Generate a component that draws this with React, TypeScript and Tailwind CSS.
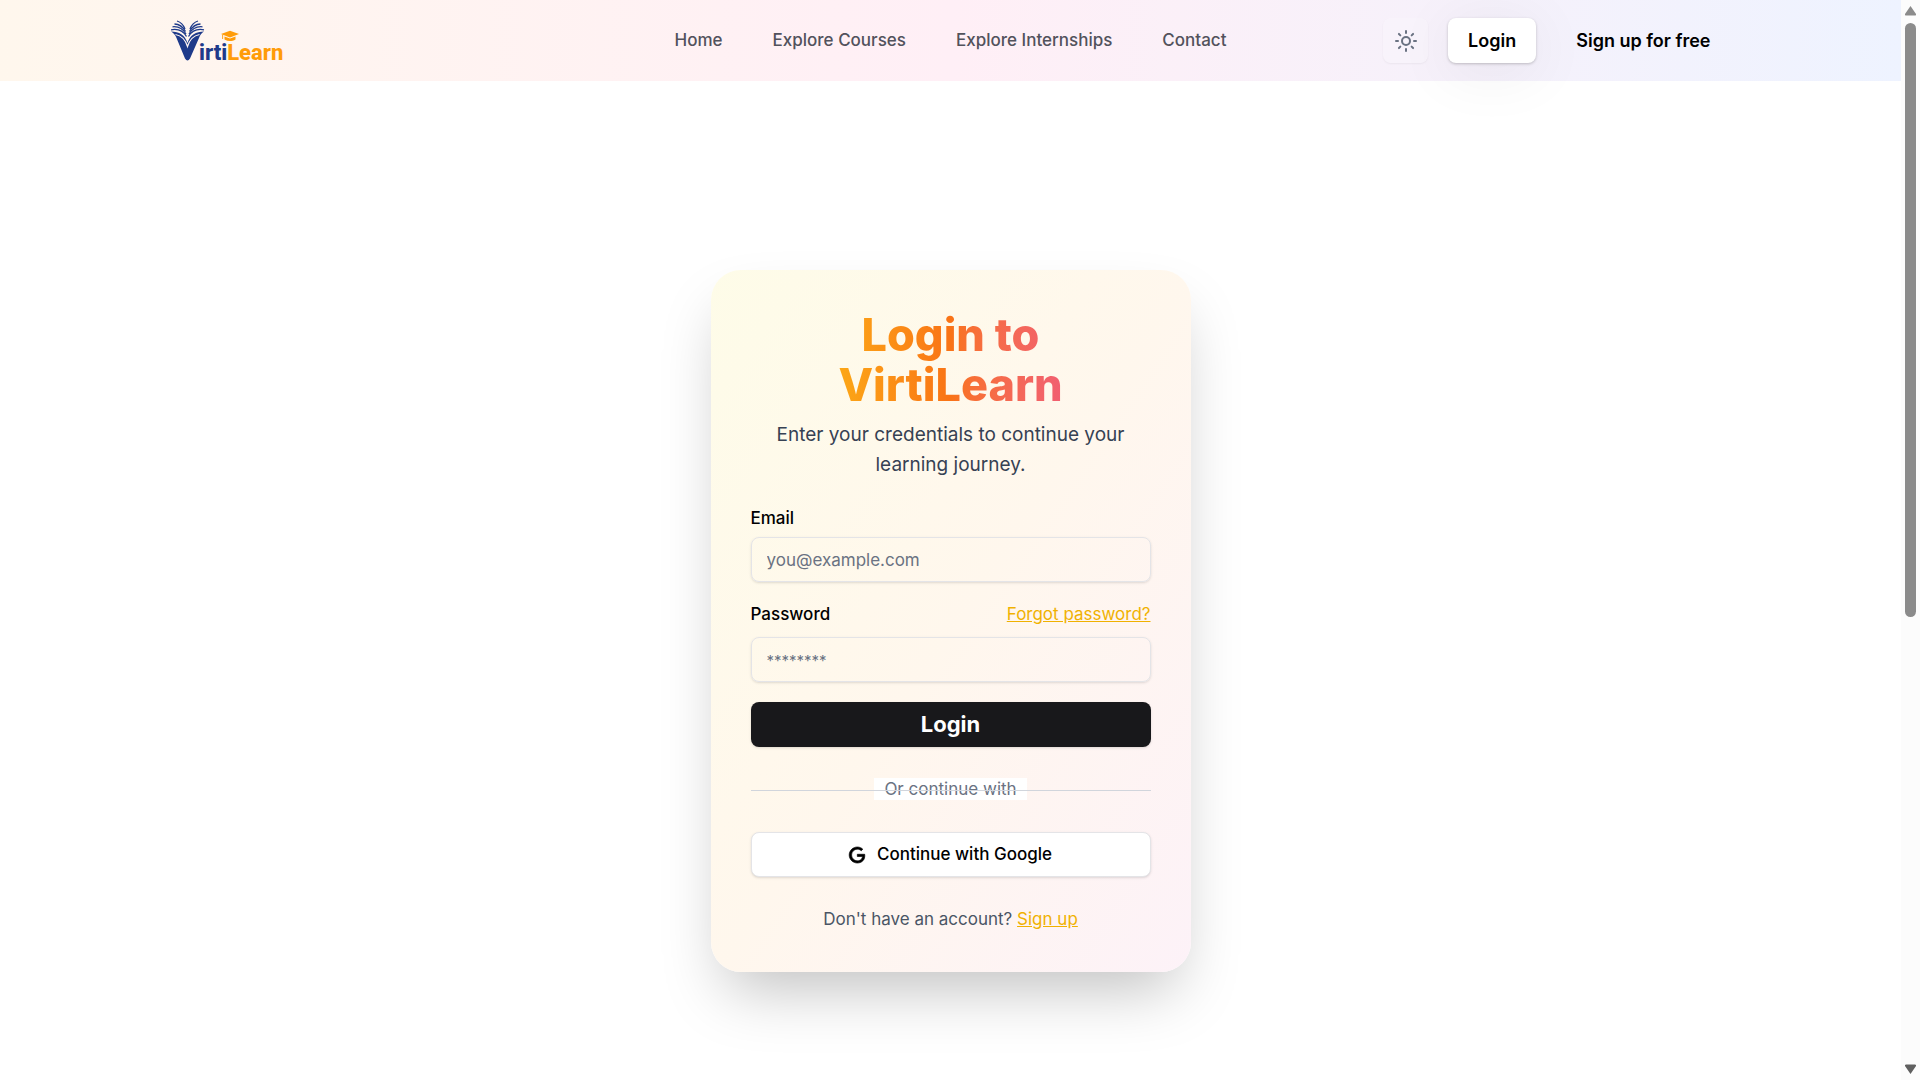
import { Sun } from 'lucide-react'
import { SiGoogle } from 'react-icons/si'

const navLinks = ['Home', 'Explore Courses', 'Explore Internships', 'Contact']

const inputClass =
  'h-[45px] w-full rounded-lg border border-zinc-200 bg-transparent px-[15px] text-[17px] shadow-sm outline-none placeholder:text-gray-500'

function Logo() {
  return (
    <svg width="118" height="50" viewBox="0 0 118 50" role="img" aria-label="VirtiLearn">
      {/* Open book forming the V */}
      <path
        d="M0 15.500 C8 15.500 14 19 16.500 27 C19 19 25 15.500 33 15.500 C30.500 17 29 19 28 22 L19 42.500 Q16.500 46.500 14 42.500 L5.500 22 C4.500 19 2.500 17 0 15.500 Z"
        fill="#1e3a8a"
      />
      <path
        d="M4.500 18.500 C10 19.500 14.500 24 16.500 30.500 C18.500 24 23 19.500 28.500 18.500"
        fill="none"
        stroke="#fff5f1"
        strokeWidth="1.200"
      />
      <g fill="none" stroke="#1e3a8a" strokeWidth="1.300">
        <path d="M0 13.800 C7 12.500 12 14.500 15.500 20.500" />
        <path d="M1.500 10.800 C7.500 10.200 12 12.800 15 18" />
        <path d="M3.500 8 C8.500 8.200 12 11 14.500 15.500" />
        <path d="M6 5 C9.500 6 12.500 9 14 13" />
        <path d="M33 13.800 C26 12.500 21 14.500 17.500 20.500" />
        <path d="M31.500 10.800 C25.500 10.200 21 12.800 18 18" />
        <path d="M29.500 8 C24.500 8.200 21 11 18.500 15.500" />
        <path d="M27 5 C23.500 6 20.500 9 19 13" />
      </g>
      <text x="28" y="44" fontFamily="Roboto, sans-serif" fontWeight="800" fontSize="22" fill="#1e3a8a">
        irti<tspan fill="#ff9c09">Learn</tspan>
      </text>
      {/* Graduation cap */}
      <g fill="#ff9c09">
        <path d="M50 18 L59 14.800 L68 18 L59 21.500 Z" />
        <path d="M53.500 20.500 L59 22.500 L64.500 20.500 V23.500 C61 25.500 57 25.500 53.500 23.500 Z" />
        <path d="M51.200 18.500 h.9 v4.500 h-.9 Z" />
      </g>
    </svg>
  )
}

function Header() {
  return (
    <header className="bg-linear-to-r from-orange-50 via-[#ffeff6] to-[#eef3ff]">
      <div className="mx-auto flex h-[81px] max-w-[1600px] items-center px-5">
        <div className="flex flex-1">
          <a href="#"><Logo /></a>
        </div>
        <nav className="flex gap-[50px] text-[17px] font-medium text-zinc-600">
          {navLinks.map((label) => (
            <a key={label} href="#">{label}</a>
          ))}
        </nav>
        <div className="flex flex-1 items-center justify-end gap-5">
          <button
            type="button"
            aria-label="Toggle theme"
            className="flex size-[45px] items-center justify-center rounded-lg bg-white/20 text-gray-500 shadow-xs"
          >
            <Sun size={24} />
          </button>
          <button
            type="button"
            className="h-[45px] rounded-lg bg-white px-5 text-[18px] font-semibold text-black shadow-[0_1px_3px_rgba(0,0,0,0.22),0_8px_62px_rgba(0,0,0,0.07)]"
          >
            Login
          </button>
          <button type="button" className="h-[45px] rounded-lg px-5 text-[18px] font-semibold text-black">
            Sign up for free
          </button>
        </div>
      </div>
    </header>
  )
}

function LoginCard() {
  return (
    <section className="w-full max-w-[480px] rounded-[30px] bg-linear-to-br from-yellow-50 via-orange-50 to-pink-50 p-10 shadow-[0_31px_62px_-15px_rgba(0,0,0,0.25)]">
      <h1 className="bg-linear-to-r from-[#facc15] via-[#f97316] to-[#ec4899] bg-clip-text text-center text-[45px] leading-[50px] font-extrabold text-transparent">
        Login to
        <br />
        VirtiLearn
      </h1>
      <p className="mt-[10px] text-center text-[19px] leading-[30px] text-gray-700">
        Enter your credentials to continue your learning journey.
      </p>

      <form className="mt-[30px] flex flex-col gap-5" onSubmit={(e) => e.preventDefault()}>
        <div className="flex flex-col gap-[10px]">
          <label htmlFor="email" className="text-[17px] leading-[17px] font-medium text-black">Email</label>
          <input id="email" type="email" placeholder="you@example.com" className={inputClass} />
        </div>
        <div className="flex flex-col gap-[10px]">
          <div className="flex items-center justify-between text-[17px] leading-[25px]">
            <label htmlFor="password" className="font-medium text-black">Password</label>
            <a href="#" className="text-yellow-500 underline">Forgot password?</a>
          </div>
          <input
            id="password"
            type="password"
            placeholder="********"
            className={`${inputClass} placeholder:text-[15px]`}
          />
        </div>
        <button type="submit" className="h-[45px] rounded-lg bg-zinc-900 text-[22px] font-bold text-white shadow-sm">
          Login
        </button>
      </form>

      <div className="relative my-[30px] text-center text-[17px] leading-[25px] text-gray-500">
        <span className="bg-white px-[10px] py-px">Or continue with</span>
        <div className="absolute inset-x-0 top-1/2 border-t border-gray-300" />
      </div>

      <button
        type="button"
        className="flex h-[45px] w-full items-center justify-center gap-3 rounded-lg border border-zinc-200 bg-white text-[17px] font-medium text-black shadow-sm"
      >
        <SiGoogle size={16} className="overflow-visible stroke-black stroke-1" />
        Continue with Google
      </button>

      <p className="mt-[30px] text-center text-[17px] leading-[25px] text-gray-600">
        Don't have an account? <a href="#" className="text-yellow-500 underline">Sign up</a>
      </p>
    </section>
  )
}

function ScrollRail() {
  return (
    <div className="flex w-[19px] shrink-0 flex-col items-center bg-[#fcfcfc] py-[5px]" aria-hidden="true">
      <svg width="13" height="11" viewBox="0 0 13 11">
        <path d="M6.500 1 L12 9 Q12.500 10.500 11 10.500 H2 Q.5 10.500 1 9 Z" fill="#8b8b8b" />
      </svg>
      <div className="mt-[7px] h-[55.5%] w-[11px] rounded-full bg-[#8b8b8b]" />
      <svg width="13" height="11" viewBox="0 0 13 11" className="mt-auto">
        <path d="M6.500 10 L1 2 Q.5 .5 2 .5 H11 Q12.500 .5 12 2 Z" fill="#606060" />
      </svg>
    </div>
  )
}

export default function App() {
  return (
    <div className="flex h-screen overflow-hidden bg-white font-['Inter',sans-serif]">
      <div className="min-w-0 flex-1">
        <Header />
        <main className="flex min-h-screen items-center justify-center">
          <LoginCard />
        </main>
      </div>
      <ScrollRail />
    </div>
  )
}
